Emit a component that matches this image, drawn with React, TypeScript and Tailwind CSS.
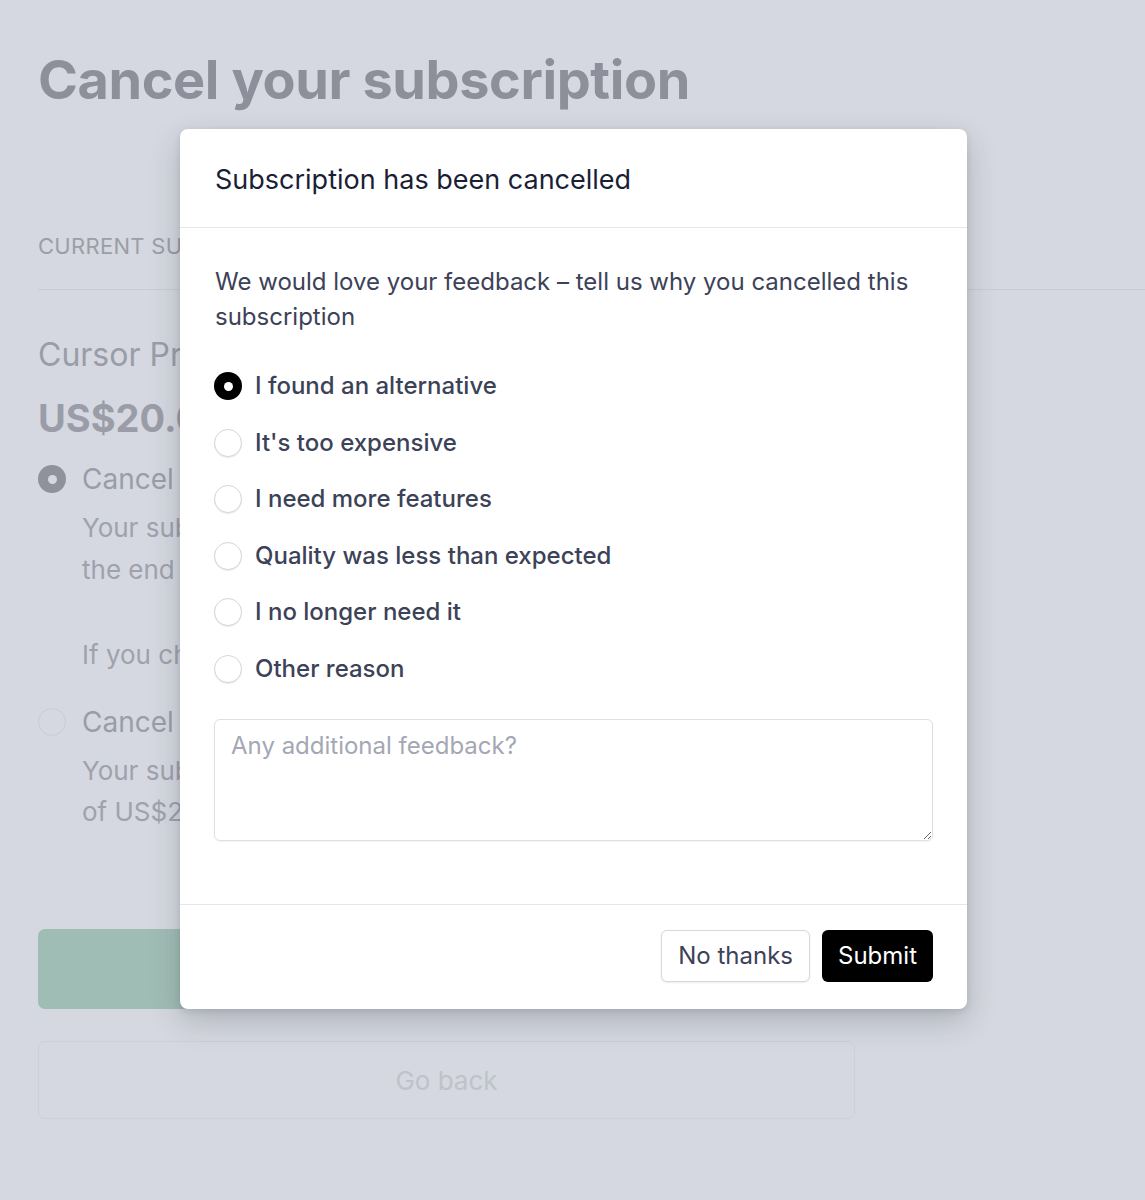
import React from 'react';

const reasons = [
  'I found an alternative',
  "It's too expensive",
  'I need more features',
  'Quality was less than expected',
  'I no longer need it',
  'Other reason',
];

const Radio = ({ checked }: { checked?: boolean }) =>
  checked ? (
    <span className="flex h-[28px] w-[28px] shrink-0 items-center justify-center rounded-full bg-black">
      <span className="h-[9px] w-[9px] rounded-full bg-white" />
    </span>
  ) : (
    <span className="h-[28px] w-[28px] shrink-0 rounded-full border-[1.5px] border-[#d3d6dc] bg-white shadow-[0_1px_1px_rgba(0,0,0,0.08)]" />
  );

const MutedRadio = ({ checked }: { checked?: boolean }) =>
  checked ? (
    <span className="flex h-[28px] w-[28px] shrink-0 items-center justify-center rounded-full bg-[#8f929c]">
      <span className="h-[9px] w-[9px] rounded-full bg-[#d5d8e0]" />
    </span>
  ) : (
    <span className="h-[28px] w-[28px] shrink-0 rounded-full border-[1.5px] border-[#c9ccd4]" />
  );

export default function App() {
  return (
    <div className="relative h-[1200px] w-[1145px] overflow-hidden bg-[#d5d8e0] font-['Inter',sans-serif]">
      {/* page behind the dialog */}
      <div className="pl-[38px] pt-[48px]">
        <h1 className="text-[54px] font-bold leading-[64px] tracking-[-0.4px] text-[#8d909b]">
          Cancel your subscription
        </h1>
        <div className="mt-[119px] text-[22px] leading-[30px] tracking-[0.3px] text-[#9b9ea8]">
          CURRENT SUBSCRIPTION
        </div>
        <div className="mt-[28px] h-px bg-[#c9ccd4]" />
        <div className="w-[817px]">
          <div className="mt-[45px] text-[32px] leading-[40px] text-[#9a9da7]">Cursor Pro</div>
          <div className="mt-[19px] text-[38px] font-bold leading-[48px] text-[#9a9da7]">US$20.00 per month</div>
          <div className="mt-[19px] flex items-center gap-[16px]">
            <MutedRadio checked />
            <span className="text-[28px] leading-[36px] text-[#9a9da7]">Cancel at end of billing period</span>
          </div>
          <div className="ml-[44px] mt-[10px] text-[26px] leading-[42px] text-[#9fa2ac]">
            <p>Your subscription will be cancelled at</p>
            <p>the end of your billing period.</p>
            <p className="mt-[43px]">If you change your mind, you can renew.</p>
          </div>
          <div className="mt-[28px] flex items-center gap-[16px]">
            <MutedRadio />
            <span className="text-[28px] leading-[36px] text-[#9a9da7]">Cancel immediately</span>
          </div>
          <div className="ml-[44px] mt-[10px] text-[26px] leading-[41px] text-[#9fa2ac]">
            <p>Your subscription will end now and a credit</p>
            <p>of US$20.00 will be applied.</p>
          </div>
          <div className="mt-[97px] flex h-[80px] items-center justify-center rounded-[7px] bg-[#a0bdb5] text-[26px] text-white">
            Cancel subscription
          </div>
          <div className="mt-[32px] flex h-[78px] items-center justify-center rounded-[7px] border border-[#cdd0d8] text-[26px] text-[#bfc2ca]">
            Go back
          </div>
        </div>
      </div>

      {/* dialog */}
      <div className="absolute left-[180px] top-[129px] w-[787px] rounded-[8px] bg-white shadow-[0_12px_30px_rgba(40,45,60,0.22),0_2px_6px_rgba(40,45,60,0.12)]">
        <div className="flex h-[99px] items-center border-b border-[#e3e6ec] px-[35px] pt-[3px]">
          <h2 className="text-[27px] leading-[36px] text-[#1a1f36]">Subscription has been cancelled</h2>
        </div>
        <div className="px-[34px] pb-[63px] pt-[36px]">
          <p className="pl-[1px] text-[24px] leading-[35px] text-[#3c4257]">
            We would love your feedback – tell us why you cancelled this subscription
          </p>
          <div className="mt-[24px] flex flex-col">
            {reasons.map((r, i) => (
              <label key={r} className="flex h-[56.5px] items-center gap-[13px]">
                <Radio checked={i === 0} />
                <span className="text-[24px] font-medium leading-[32px] text-[#3c4257]">{r}</span>
              </label>
            ))}
          </div>
          <textarea
            placeholder="Any additional feedback?"
            className="mt-[22px] block h-[122px] w-full rounded-[6px] border border-[#dcdfe5] px-[16px] py-[10px] text-[24px] leading-[32px] text-[#3c4257] shadow-[0_1px_2px_rgba(0,0,0,0.05)] outline-none placeholder:text-[#a3a8b4]"
          />
        </div>
        <div className="flex items-center justify-end gap-[12px] border-t border-[#e3e6ec] px-[34px] pb-[27px] pt-[25px]">
          <button className="h-[52px] rounded-[6px] border border-[#d5d8de] bg-white px-[16px] text-[24px] text-[#3c4257] shadow-[0_1px_2px_rgba(0,0,0,0.08)]">
            No thanks
          </button>
          <button className="h-[52px] rounded-[6px] bg-black px-[16px] text-[24px] text-white">Submit</button>
        </div>
      </div>
    </div>
  );
}
